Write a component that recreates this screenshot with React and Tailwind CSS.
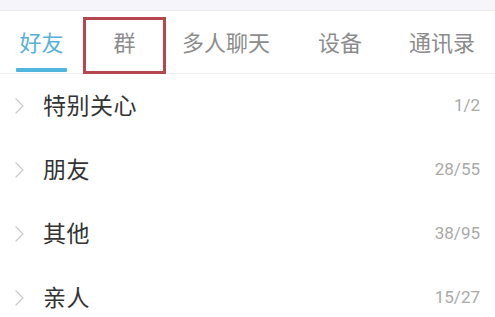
import React from 'react';

const tabs = [
    { label: '好友', width: 'w-[83px]' },
    { label: '群', width: 'w-[83px]' },
    { label: '多人聊天', width: 'w-[120px]' },
    { label: '设备', width: 'w-[108px]' },
    { label: '通讯录', width: 'w-[96px]' },
];

const groups = [
    { name: '特别关心', count: '1/2' },
    { name: '朋友', count: '28/55' },
    { name: '其他', count: '38/95' },
    { name: '亲人', count: '15/27' },
];

const Chevron = () => (
    <svg width="9" height="16" viewBox="0 0 9 16" fill="none" className="shrink-0">
        <path d="M1 1l7 7-7 7" stroke="#cbcbcb" strokeWidth="1.3" strokeLinecap="round" strokeLinejoin="round" />
    </svg>
);

const App = () => {
    return (
        <div className="w-[495px] h-[317px] overflow-hidden bg-white font-['Noto_Sans_CJK_SC',sans-serif]">
            <div className="h-[11px] bg-[#f6f5f9] border-b border-[#ebeaf0]" />
            <div className="flex h-[63px] border-b border-[#efefef]">
                {tabs.map((tab, i) => (
                    <div key={tab.label} className={`${tab.width} relative flex flex-col items-center`}>
                        <span
                            className={`mt-[19px] text-[22px] leading-[22px] ${i === 0 ? 'text-[#56b2d3]' : 'text-[#8c8c8c]'}`}
                        >
                            {tab.label}
                        </span>
                        {i === 0 && <div className="mt-[16px] w-[51px] h-[4px] rounded-[1px] bg-[#4fb6de]" />}
                        {i === 1 && (
                            <div className="absolute left-0 right-0 top-[6px] h-[57px] border-[3px] border-[#b6474f]" />
                        )}
                    </div>
                ))}
            </div>
            <div>
                {groups.map((g) => (
                    <div key={g.name} className="flex items-center h-[64px] pl-[15px] pr-[15px]">
                        <Chevron />
                        <span className="ml-[19px] pb-[4px] text-[23px] leading-[24px] text-[#333333] tracking-[0.5px]">{g.name}</span>
                        <span className="ml-auto text-[17px] text-[#a9a9a9] font-['Roboto',sans-serif]">{g.count}</span>
                    </div>
                ))}
            </div>
        </div>
    );
};

export default App;
